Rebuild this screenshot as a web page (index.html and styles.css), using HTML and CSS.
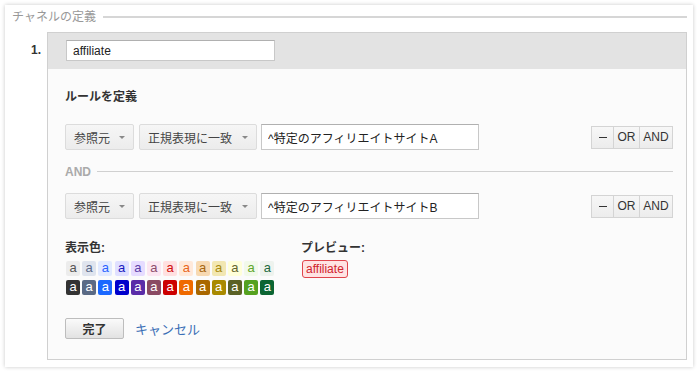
FILE: index.html
```html
<!DOCTYPE html>
<html lang="ja">
<head>
  <meta charset="UTF-8" />
  <title>チャネルの定義</title>
  <link rel="stylesheet" href="styles.css">
</head>
<body>
  <div class="card">
    <div class="section-title">
      <span>チャネルの定義</span>
      <div class="rule-line"></div>
    </div>

    <div class="channel">
      <div class="channel-num">1.</div>
      <div class="panel">
        <div class="panel-head">
          <input class="text-input name-input" type="text" value="affiliate">
        </div>

        <div class="panel-body">
          <div class="heading">ルールを定義</div>

          <div class="rule-row">
            <button class="drop drop-dim">参照元 <span class="caret"></span></button>
            <button class="drop drop-match">正規表現に一致 <span class="caret"></span></button>
            <input class="text-input rule-input" type="text" value="^特定のアフィリエイトサイトA">
            <div class="btn-group">
              <button class="mini minus"><span class="dash"></span></button>
              <button class="mini">OR</button>
              <button class="mini">AND</button>
            </div>
          </div>

          <div class="and-sep">
            <span>AND</span>
            <div class="rule-line"></div>
          </div>

          <div class="rule-row">
            <button class="drop drop-dim">参照元 <span class="caret"></span></button>
            <button class="drop drop-match">正規表現に一致 <span class="caret"></span></button>
            <input class="text-input rule-input" type="text" value="^特定のアフィリエイトサイトB">
            <div class="btn-group">
              <button class="mini minus"><span class="dash"></span></button>
              <button class="mini">OR</button>
              <button class="mini">AND</button>
            </div>
          </div>

          <div class="color-area">
            <div class="color-col">
              <div class="label">表示色:</div>
              <div class="swatches">
                <span class="sw l1">a</span><span class="sw l2">a</span><span class="sw l3">a</span><span class="sw l4">a</span><span class="sw l5">a</span><span class="sw l6">a</span><span class="sw l7">a</span><span class="sw l8">a</span><span class="sw l9">a</span><span class="sw l10">a</span><span class="sw l11">a</span><span class="sw l12">a</span><span class="sw l13">a</span>
                <span class="sw d1">a</span><span class="sw d2">a</span><span class="sw d3">a</span><span class="sw d4">a</span><span class="sw d5">a</span><span class="sw d6">a</span><span class="sw d7">a</span><span class="sw d8">a</span><span class="sw d9">a</span><span class="sw d10">a</span><span class="sw d11">a</span><span class="sw d12">a</span><span class="sw d13">a</span>
              </div>
            </div>
            <div class="preview-col">
              <div class="label">プレビュー:</div>
              <span class="badge">affiliate</span>
            </div>
          </div>

          <div class="actions">
            <button class="done">完了</button>
            <a class="cancel" href="#">キャンセル</a>
          </div>
        </div>
      </div>
    </div>
  </div>
</body>
</html>
```

FILE: styles.css
```css
body {
  margin: 0;
  padding: 5px;
  background: #fff;
  font-family: 'Liberation Sans', 'Noto Sans CJK JP', sans-serif;
  font-size: 12px;
  color: #333;
}

.card {
  width: 688px;
  height: 362px;
  box-sizing: border-box;
  padding: 4px 6px 0 7px;
  background: #fff;
  box-shadow: 0 0 4px rgba(0, 0, 0, 0.22);
}

.section-title {
  display: flex;
  align-items: center;
  gap: 7px;
  line-height: 16px;
  color: #999;
  font-size: 12px;
}

.rule-line {
  flex: 1;
  height: 1px;
  background: #ccc;
}

.section-title .rule-line {
  height: 2px;
  background: #d6d6d6;
}

.channel {
  display: flex;
  margin-top: 7px;
}

.channel-num {
  width: 35px;
  box-sizing: border-box;
  padding: 11px 6px 0 0;
  text-align: right;
  font-weight: bold;
  font-size: 12px;
  color: #333;
}

.panel {
  flex: 1;
  border: 1px solid #d0d0d0;
  background: #fbfbfb;
  height: 328px;
  box-sizing: border-box;
}

.panel-head {
  background: #e3e3e3;
  height: 36px;
  box-sizing: border-box;
  padding: 7px 18px 0;
}

.text-input {
  font-family: inherit;
  font-size: 12px;
  color: #222;
  background: #fff;
  border: 1px solid #c8c8c8;
  border-top-color: #b0b0b0;
  box-sizing: border-box;
  padding: 0 6px;
  outline: none;
}

.name-input {
  width: 209px;
  height: 21px;
}

.panel-body {
  padding: 20px 13px 0 17px;
}

.heading {
  font-weight: bold;
  line-height: 16px;
  color: #333;
}

.rule-row {
  display: flex;
  align-items: center;
  height: 26px;
  margin-top: 19px;
}

.rule-row + .and-sep + .rule-row {
  margin-top: 0;
}

.drop {
  height: 26px;
  box-sizing: border-box;
  border: 1px solid #dcdcdc;
  border-radius: 2px;
  background: linear-gradient(#f6f6f6, #ececec);
  font-family: inherit;
  font-size: 12px;
  color: #444;
  text-align: left;
  padding: 0 0 0 8px;
  margin: 0 5px 0 0;
  display: flex;
  align-items: center;
}

.drop-dim { width: 69px; }
.drop-match { width: 118px; margin-right: 4px; }

.caret {
  margin-left: auto;
  margin-right: 8px;
  width: 0;
  height: 0;
  border-left: 3px solid transparent;
  border-right: 3px solid transparent;
  border-top: 3px solid #888;
}

.rule-input {
  width: 218px;
  height: 26px;
}

.btn-group {
  display: flex;
  margin-left: auto;
}

.mini {
  height: 23px;
  box-sizing: border-box;
  border: 1px solid #d4d4d4;
  margin: 0 0 0 -1px;
  background: linear-gradient(#f7f7f7, #ececec);
  font-family: inherit;
  font-size: 12px;
  color: #333;
  padding: 0;
  width: 27px;
}

.mini.minus {
  width: 23px;
  margin-left: 0;
  display: flex;
  align-items: center;
  justify-content: center;
}

.dash {
  display: block;
  width: 8px;
  height: 1px;
  background: #333;
}

.mini:last-child { width: 34px; }

.and-sep {
  display: flex;
  align-items: center;
  gap: 6px;
  height: 43px;
  color: #aaa;
  font-weight: bold;
  font-size: 12px;
}

.and-sep .rule-line {
  background: #d0d0d0;
}

.color-area {
  display: flex;
  margin-top: 21px;
}

.color-col {
  width: 236px;
  padding-left: 1px;
}

.label {
  font-weight: bold;
  line-height: 16px;
  color: #333;
  margin-left: -1px;
}

.swatches {
  display: grid;
  grid-template-columns: repeat(13, 14px);
  column-gap: 2.2px;
  row-gap: 4px;
  margin-top: 5px;
}

.sw {
  height: 15px;
  border-radius: 2px;
  text-align: center;
  line-height: 14px;
  font-size: 13px;
  color: #fff;
}

.l1 { background: #ececec; color: #555; }
.l2 { background: #dfe4ee; color: #5a6a8a; }
.l3 { background: #e2eaff; color: #2b63ff; }
.l4 { background: #e0e0ff; color: #1a1ac0; }
.l5 { background: #e6dcff; color: #5c3fa8; }
.l6 { background: #fbe6f1; color: #8c4d6c; }
.l7 { background: #ffe0e0; color: #d01010; }
.l8 { background: #ffe9da; color: #e8661a; }
.l9 { background: #f7d9b2; color: #a66510; }
.l10 { background: #f2e7b2; color: #a88a10; }
.l11 { background: #ffffd9; color: #63652d; }
.l12 { background: #f2f9ea; color: #5ea62c; }
.l13 { background: #eef3ee; color: #1f6a40; }

.d1 { background: #333; }
.d2 { background: #5a6a85; }
.d3 { background: #1b68ff; }
.d4 { background: #0000cc; }
.d5 { background: #5a2ca8; }
.d6 { background: #8a4a63; }
.d7 { background: #cc0000; }
.d8 { background: #ef6a00; }
.d9 { background: #a96700; }
.d10 { background: #a98a00; }
.d11 { background: #5a6125; }
.d12 { background: #55a11f; }
.d13 { background: #0b6532; }

.badge {
  display: inline-block;
  margin-top: 4px;
  padding: 0 3px;
  line-height: 16px;
  border: 1px solid #e0454c;
  border-radius: 3px;
  background: #ffe3e3;
  color: #d0242c;
  font-size: 12px;
}

.actions {
  display: flex;
  align-items: center;
  gap: 11px;
  margin-top: 23px;
}

.done {
  width: 59px;
  height: 21px;
  box-sizing: border-box;
  border: 1px solid #bdbdbd;
  border-radius: 2px;
  background: linear-gradient(#fafafa, #e2e2e2);
  font-family: inherit;
  font-weight: bold;
  font-size: 12px;
  color: #333;
  padding: 0;
}

.cancel {
  color: #3b6fb6;
  text-decoration: none;
  font-size: 13px;
}
```
